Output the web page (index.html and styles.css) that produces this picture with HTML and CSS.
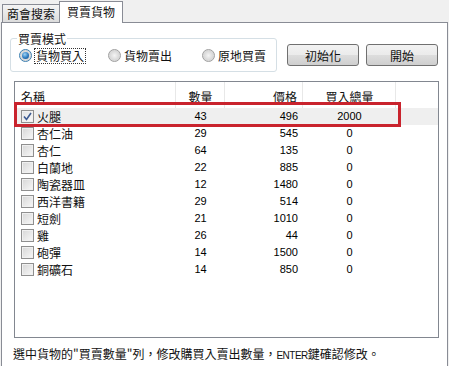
FILE: index.html
```html
<!DOCTYPE html>
<html lang="zh-Hant">
<head>
    <meta charset="UTF-8">
    <title>買賣貨物</title>
    <link rel="stylesheet" href="styles.css">
</head>
<body>
    <div class="tabs">
        <div class="tab">商會搜索</div>
        <div class="tab active">買賣貨物</div>
    </div>

    <div class="panel">
        <div class="top-row">
            <fieldset class="mode">
                <legend>買賣模式</legend>
                <label class="radio-item">
                    <span class="radio checked"></span>
                    <span class="focus">貨物買入</span>
                </label>
                <label class="radio-item">
                    <span class="radio"></span>
                    <span>貨物賣出</span>
                </label>
                <label class="radio-item">
                    <span class="radio"></span>
                    <span>原地買賣</span>
                </label>
            </fieldset>
            <button class="btn">初始化</button>
            <button class="btn">開始</button>
        </div>

        <div class="listbox">
            <div class="list-head">
                <div class="hcell name">名稱</div>
                <div class="hcell center">數量</div>
                <div class="hcell right">價格</div>
                <div class="hcell center">買入總量</div>
                <div class="hcell"></div>
            </div>
            <div id="rows"></div>
            <div class="mark"></div>
        </div>

        <div class="hint">選中貨物的"買賣數量"列，修改購買入賣出數量，<span class="latin">ENTER</span>鍵確認修改。</div>
    </div>

    <script>
        // 貨物清單
        const goods = [
            ['火腿', 43, 496, 2000, true],
            ['杏仁油', 29, 545, 0],
            ['杏仁', 64, 135, 0],
            ['白蘭地', 22, 885, 0],
            ['陶瓷器皿', 12, 1480, 0],
            ['西洋書籍', 29, 514, 0],
            ['短劍', 21, 1010, 0],
            ['雞', 26, 44, 0],
            ['砲彈', 14, 1500, 0],
            ['銅礦石', 14, 850, 0]
        ];

        const rows = document.getElementById('rows');
        goods.forEach(function(g) {
            const row = document.createElement('div');
            row.className = 'row' + (g[4] ? ' selected' : '');
            row.innerHTML =
                '<div class="cell name"><span class="check' + (g[4] ? ' on' : '') + '">' +
                (g[4] ? '<svg width="9" height="9" viewBox="0 0 9 9"><path d="M1 4.5 L3.5 7.5 L8 1" fill="none" stroke="#3d5b92" stroke-width="1.6"/></svg>' : '') +
                '</span><span class="label">' + g[0] + '</span></div>' +
                '<div class="cell num center">' + g[1] + '</div>' +
                '<div class="cell num right">' + g[2] + '</div>' +
                '<div class="cell num center">' + g[3] + '</div>' +
                '<div class="cell"></div>';
            rows.appendChild(row);
        });
    </script>
</body>
</html>
```

FILE: styles.css
```css
* {
    margin: 0;
    padding: 0;
    box-sizing: border-box;
}

body {
    font-family: "Noto Sans CJK TC", "Noto Sans CJK SC", sans-serif;
    font-size: 12px;
    color: #111;
    background: #f0f0f0;
    width: 449px;
    height: 366px;
    overflow: hidden;
}

/* 分頁 */
.tabs {
    display: flex;
    align-items: flex-end;
    height: 22px;
    padding-left: 2px;
}

.tab {
    height: 18px;
    padding: 0 4px;
    line-height: 17px;
    border: 1px solid #898c95;
    border-bottom: none;
    background: linear-gradient(#f4f4f4, #dcdcdc);
}

.tab.active {
    height: 22px;
    line-height: 19px;
    background: #fff;
    margin-left: -1px;
    margin-bottom: -1px;
    position: relative;
    z-index: 1;
    padding: 0 7px;
}

.panel {
    margin-left: 1px;
    width: 447px;
    height: 345px;
    border: 1px solid #898c95;
    border-bottom: none;
    background: #fff;
}

/* 買賣模式 */
.top-row {
    display: flex;
    align-items: flex-start;
    padding: 8px 0 0 8px;
}

.mode {
    width: 267px;
    height: 41px;
    border: 1px solid #d5dfe5;
    border-radius: 3px;
    padding: 0 0 0 8px;
    display: flex;
    align-items: center;
}

.mode legend {
    margin-left: -2px;
    padding: 0 1px;
    line-height: 15px;
}

.radio-item {
    display: flex;
    align-items: center;
    margin-right: 23px;
    margin-top: -6px;
}

.radio-item:nth-of-type(2) {
    margin-right: 30px;
}

.radio-item:last-child {
    margin-right: 0;
}

.radio {
    width: 13px;
    height: 13px;
    border-radius: 50%;
    border: 1px solid #a0a0a0;
    background: radial-gradient(circle at 50% 50%, #f4f4f4 0, #d8d8d8 60%, #e8e8e8 100%);
    margin-right: 3px;
    display: flex;
    align-items: center;
    justify-content: center;
}

.radio.checked {
    border-color: #3c7fb1;
}

.radio.checked::after {
    content: "";
    width: 7px;
    height: 7px;
    border-radius: 50%;
    background: radial-gradient(circle at 40% 35%, #9fd4f5 0, #2f7bbf 55%, #15457a 100%);
}

.focus {
    outline: 1px dotted #333;
    padding: 0 1px;
    line-height: 14px;
}

.btn {
    width: 72px;
    height: 22px;
    margin-top: 13px;
    margin-left: 10px;
    border: 1px solid #707070;
    border-radius: 3px;
    background: linear-gradient(#f2f2f2 0, #ebebeb 50%, #dddddd 51%, #cfcfcf 100%);
    font-family: inherit;
    font-size: 12px;
    color: #111;
}

.btn + .btn {
    margin-left: 7px;
}

/* 貨物清單 */
.listbox {
    position: relative;
    margin: 9px 0 0 12px;
    width: 425px;
    height: 257px;
    border: 1px solid #828790;
}

.list-head,
.row {
    display: grid;
    grid-template-columns: 161px 49px 78px 93px 1fr;
}

.list-head {
    height: 26px;
}

.hcell {
    border-right: 1px solid #e8e8e8;
    padding: 7px 5px 0 6px;
    line-height: 15px;
}

.hcell:last-child {
    border-right: none;
}

.row {
    height: 17px;
    line-height: 17px;
}

.row.selected {
    background: #efefef;
}

.cell {
    padding: 0 5px;
    white-space: nowrap;
    overflow: hidden;
}

.cell.name {
    display: flex;
    align-items: center;
    padding-left: 6px;
}

.label {
    line-height: 14px;
}

.num {
    font-family: "Liberation Sans", sans-serif;
    font-size: 11px;
    color: #000;
}

.center {
    text-align: center;
}

.right {
    text-align: right;
}

.check {
    width: 13px;
    height: 13px;
    border: 1px solid #8f8f8f;
    background: linear-gradient(135deg, #d6d6d6, #f8f8f8);
    box-shadow: inset 0 0 0 1px #f0f0f0;
    margin-right: 3px;
    display: flex;
    align-items: center;
    justify-content: center;
}

.check.on {
    background: linear-gradient(135deg, #e4e4e4, #fafafa);
}

/* 標註框 */
.mark {
    position: absolute;
    left: -1px;
    top: 20px;
    width: 387px;
    height: 25px;
    border: 3px solid #c9232d;
    pointer-events: none;
}

.hint {
    margin: 8px 0 0 11px;
    line-height: 15px;
    white-space: nowrap;
}

.latin {
    font-family: "Liberation Sans", sans-serif;
    font-size: 10px;
    letter-spacing: -0.5px;
}
```
